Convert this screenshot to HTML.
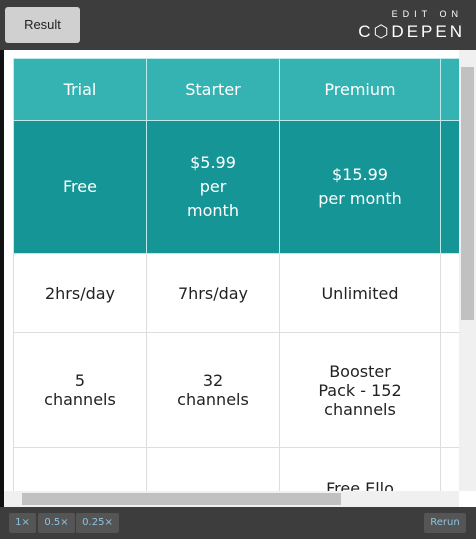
<!DOCTYPE html>
<html><head><style>
*{margin:0;padding:0;box-sizing:border-box}
body{width:476px;height:539px;background:#3d3d3d;position:relative;overflow:hidden;font-family:"DejaVu Sans","Liberation Sans",sans-serif}
.top{position:absolute;left:0;top:0;width:476px;height:50px;background:#3d3d3d}
.res{position:absolute;left:5px;top:7px;width:75px;height:36px;background:#d0d0d0;border-radius:3px;font-size:13px;color:#222;text-align:center;line-height:36px;font-family:"Liberation Sans",sans-serif}
.edit{position:absolute;right:13px;top:9px;color:#fff;font-size:9px;letter-spacing:5px;font-family:"Liberation Sans",sans-serif}
.cp{position:absolute;right:11px;top:22px;color:#fff;font-size:17px;letter-spacing:3px;font-family:"Liberation Sans",sans-serif}
.frame{position:absolute;left:0;top:50px;width:476px;height:457px;background:#fff;overflow:hidden}
.strip{position:absolute;left:0;top:0;width:4px;height:457px;background:#111}
table{position:absolute;left:13px;top:8px;width:474px;border-collapse:collapse;font-size:16px;text-align:center;color:#222;table-layout:fixed}
td{border:1px solid #ddd;vertical-align:middle;line-height:19px;overflow:hidden}
tr.h td{background:#35b3b3;color:#fff;height:62px;border-color:#bfe8e8}
tr.p td{background:#159595;color:#fff;height:133px;border-color:#bfe8e8;line-height:24px}
.vs{position:absolute;left:459px;top:0;width:17px;height:441px;background:#f0f0f0}
.vt{position:absolute;left:2px;top:17px;width:13px;height:253px;background:#c1c1c1}
.hs{position:absolute;left:4px;top:441px;width:455px;height:16px;background:#f0f0f0}
.ht{position:absolute;left:18px;top:2px;width:319px;height:12px;background:#c1c1c1}
.bb{position:absolute;top:513px;height:20px;background:#555;color:#8cc4e0;font-size:10px;line-height:20px;text-align:center;border-radius:2px}
</style></head><body>
<div class="top"><div class="res">Result</div><div class="edit">EDIT ON</div><div class="cp">C⬡DEPEN</div></div>
<div class="frame"><div class="strip"></div>
<table>
<colgroup><col style="width:133px"><col style="width:133px"><col style="width:161px"><col style="width:47px"></colgroup>
<tr class="h"><td>Trial</td><td>Starter</td><td>Premium</td><td></td></tr>
<tr class="p"><td>Free</td><td>$5.99<br>per<br>month</td><td>$15.99<br>per month</td><td></td></tr>
<tr><td style="height:79px">2hrs/day</td><td>7hrs/day</td><td>Unlimited</td><td></td></tr>
<tr><td style="height:115px">5<br>channels</td><td>32<br>channels</td><td>Booster<br>Pack - 152<br>channels</td><td></td></tr>
<tr><td style="height:80px"></td><td></td><td style="vertical-align:top;padding-top:31px">Free Ello</td><td></td></tr>
</table>
<div class="vs"><div class="vt"></div></div>
<div class="hs"><div class="ht"></div></div>
</div>
<div class="bb" style="left:9px;width:27px">1×</div>
<div class="bb" style="left:38px;width:37px">0.5×</div>
<div class="bb" style="left:76px;width:43px">0.25×</div>
<div class="bb" style="left:424px;width:42px">Rerun</div>
</body></html>
